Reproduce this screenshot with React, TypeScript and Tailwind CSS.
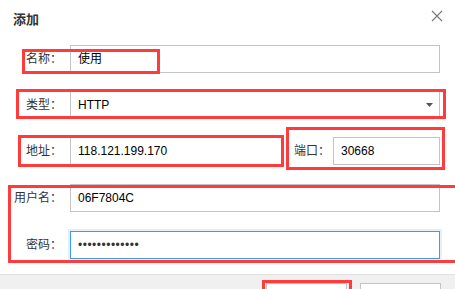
import React from "react";

const font = { fontFamily: '"Liberation Sans", "Noto Sans CJK SC", sans-serif' };

function Label({ children }: { children: React.ReactNode }) {
  return (
    <div className="w-[62px] shrink-0 text-right text-[12px] text-[#333] leading-[28px]">{children}</div>
  );
}

function Box({ children, className = "" }: { children?: React.ReactNode; className?: string }) {
  return (
    <div className={"h-[28px] border border-[#c4c4c4] bg-white flex items-center pl-[7px] text-[12px] text-black " + className}>
      {children}
    </div>
  );
}

export default function App() {
  return (
    <div className="relative w-[455px] h-[289px] bg-white overflow-hidden" style={font}>
      <div className="flex items-start justify-between pl-[13px] pr-[12px] pt-[11px] h-[45px]">
        <div className="text-[13px] font-bold text-[#333] leading-[18px]">添加</div>
        <svg width="12" height="12" viewBox="0 0 12 12" className="mt-[-1px]">
          <path d="M1 1 L11 11 M11 1 L1 11" stroke="#777" strokeWidth="1.1" />
        </svg>
      </div>

      <div className="flex flex-col pr-[15px]">
        <div className="flex gap-[8px]">
          <Label>名称：</Label>
          <Box className="flex-1">使用</Box>
        </div>
        <div className="flex gap-[8px] mt-[18px]">
          <Label>类型：</Label>
          <Box className="flex-1 justify-between pr-[6px]">
            <span>HTTP</span>
            <svg width="7" height="4" viewBox="0 0 7 4">
              <path d="M0 0 H7 L3.5 4 Z" fill="#555" />
            </svg>
          </Box>
        </div>
        <div className="flex mt-[18px]">
          <div className="flex gap-[8px]">
            <Label>地址：</Label>
            <Box className="w-[212px]">118.121.199.170</Box>
          </div>
          <div className="ml-[12px] w-[36px] text-[12px] text-[#333] leading-[28px]">端口：</div>
          <Box className="ml-[3px] flex-1">30668</Box>
        </div>
        <div className="flex gap-[8px] mt-[19px]">
          <Label>用户名：</Label>
          <Box className="flex-1">06F7804C</Box>
        </div>
        <div className="flex gap-[8px] mt-[19px]">
          <Label>密码：</Label>
          <div className="flex-1 h-[28px] border border-[#3d9bf5] bg-white flex items-center pl-[7px] text-[12px] text-[#333] shadow-[0_0_0_2px_#e3f0fd] tracking-[0.5px]">
            •••••••••••••
          </div>
        </div>
      </div>

      <div className="absolute left-0 right-0 top-[274px] bottom-0 border-t border-[#e2e2e2] bg-[#f0f0f0] flex gap-[13px] pl-[266px] pt-[8px]">
        <div className="w-[81px] h-[24px] border border-[#c4c4c4] bg-white" />
        <div className="w-[81px] h-[24px] border border-[#c4c4c4] bg-white" />
      </div>

      <div className="absolute left-[22px] top-[49px] w-[138px] h-[25px] border-[3px] border-[#ff3b3b]" />
      <div className="absolute left-[16px] top-[89px] w-[430px] h-[30px] border-[3px] border-[#ff3b3b]" />
      <div className="absolute left-[18px] top-[135px] w-[266px] h-[32px] border-[3px] border-[#ff3b3b]" />
      <div className="absolute left-[286px] top-[127px] w-[159px] h-[43px] border-[3px] border-[#ff3b3b]" />
      <div className="absolute left-[8px] top-[185px] w-[470px] h-[78px] border-[3px] border-[#ff3b3b]" />
      <div className="absolute left-[262px] top-[280px] w-[90px] h-[20px] border-[3px] border-[#ff3b3b]" />
    </div>
  );
}
